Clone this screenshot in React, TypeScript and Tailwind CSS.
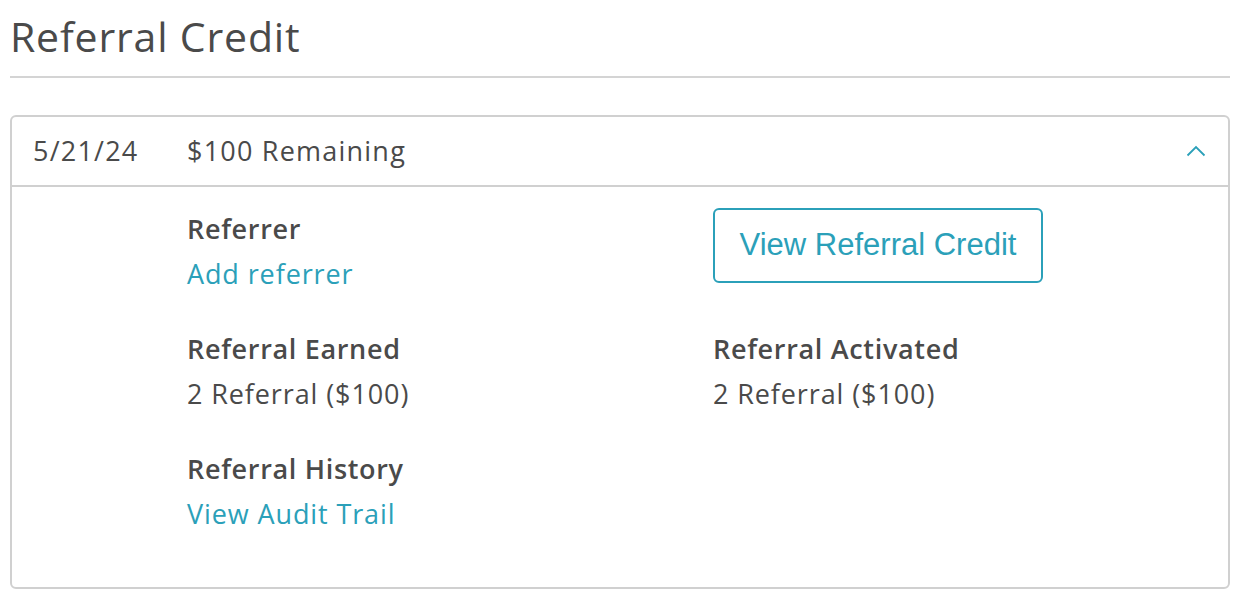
const font = { fontFamily: "'Open Sans', Lato, sans-serif" };

function Field({ label, children }: { label: string; children: React.ReactNode }) {
  return (
    <div className="flex flex-col">
      <div className="h-[45px] text-[27px] font-semibold leading-[45px] tracking-[0.025em] text-[#4a4a4a]">{label}</div>
      <div className="h-[45px] text-[27px] leading-[45px] tracking-[0.033em]">{children}</div>
    </div>
  );
}

export default function App() {
  return (
    <div className="min-h-[596px] bg-white px-[10px] pt-[10px] text-[#4a4a4a]" style={font}>
      {/* Title */}
      <h1 className="h-[52px] text-[41px] leading-[52px] tracking-[0.02em] text-[#4a4a4a]">Referral Credit</h1>
      <div className="mt-[14px] mr-[2px] h-[2px] bg-[#d4d4d4]" />

      {/* Credit card */}
      <div className="mt-[37px] mr-[2px] overflow-hidden rounded-[6px] border-2 border-[#d0d0d0]">
        <div className="flex h-[70px] items-center border-b-2 border-[#d0d0d0] pr-[22px] text-[27px] tracking-[0.045em]">
          <span className="w-[175px] pl-[21px]">5/21/24</span>
          <span className="flex-1">$100 Remaining</span>
          <svg width="20" height="14" viewBox="0 0 20 14" className="text-[#2ba0b9]">
            <path d="M1.5 11.5 L10 3 L18.5 11.5" fill="none" stroke="currentColor" strokeWidth="1.8" />
          </svg>
        </div>

        <div className="grid grid-cols-[526px_1fr] gap-y-[30px] pt-[19px] pb-[51px] pl-[175px]">
          <Field label="Referrer">
            <a className="text-[#2ba0b9]">Add referrer</a>
          </Field>
          <div>
            <button
              className="mt-[2px] h-[75px] w-[330px] rounded-[6px] border-2 border-[#2ba0b9] text-[31px] text-[#2ba0b9]"
              style={{ fontFamily: "'Liberation Sans', Arial, sans-serif" }}
            >
              View Referral Credit
            </button>
          </div>
          <Field label="Referral Earned">2 Referral ($100)</Field>
          <Field label="Referral Activated">2 Referral ($100)</Field>
          <Field label="Referral History">
            <a className="text-[#2ba0b9]">View Audit Trail</a>
          </Field>
        </div>
      </div>
    </div>
  );
}
